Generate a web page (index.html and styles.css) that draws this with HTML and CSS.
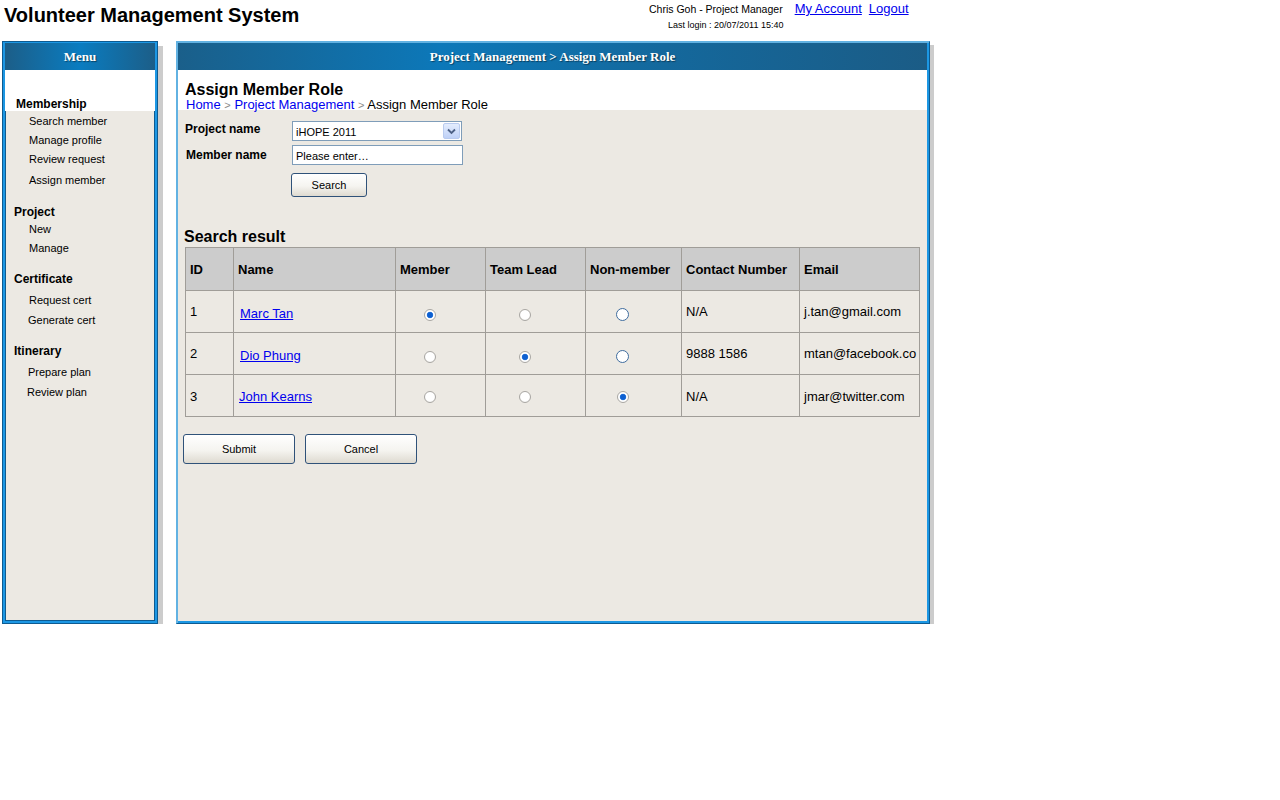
FILE: index.html
```html
<!DOCTYPE html>
<html lang="en">
<head>
<meta charset="utf-8">
<title>Volunteer Management System</title>
<link rel="stylesheet" href="styles.css">
</head>
<body>
<header class="top">
  <h1 class="site-title">Volunteer Management System</h1>
  <div class="user-info">
    <div class="user-line">
      <span class="user-name">Chris Goh - Project Manager</span>
      <a href="#" class="top-link account-link">My Account</a>
      <a href="#" class="top-link logout-link">Logout</a>
    </div>
    <div class="last-login">Last login : 20/07/2011 15:40</div>
  </div>
</header>

<div class="main">
  <aside class="panel panel-menu">
    <div class="panel-head">Menu</div>
    <div class="menu-top"><h4 class="menu-heading">Membership</h4></div>
    <div class="panel-body menu-body">
      <ul class="menu-list">
        <li>Search member</li>
        <li>Manage profile</li>
        <li>Review request</li>
        <li class="gap">Assign member</li>
      </ul>
      <div class="menu-group">
        <h4 class="menu-heading">Project</h4>
        <ul class="menu-list">
          <li>New</li>
          <li>Manage</li>
        </ul>
      </div>
      <div class="menu-group">
        <h4 class="menu-heading">Certificate</h4>
        <ul class="menu-list spaced">
          <li>Request cert</li>
          <li class="nudge">Generate cert</li>
        </ul>
      </div>
      <div class="menu-group">
        <h4 class="menu-heading">Itinerary</h4>
        <ul class="menu-list spaced">
          <li class="nudge">Prepare plan</li>
          <li class="nudge2">Review plan</li>
        </ul>
      </div>
    </div>
  </aside>

  <section class="panel panel-content">
    <div class="panel-head">Project Management &gt; Assign Member Role</div>
    <div class="content-top">
      <h2 class="page-title">Assign Member Role</h2>
      <div class="crumbs"><a href="#" class="crumb-link">Home</a> <span class="sep">&gt;</span> <a href="#" class="crumb-link">Project Management</a> <span class="sep">&gt;</span> Assign Member Role</div>
    </div>
    <div class="panel-body content-body">
      <form class="search-form">
        <div class="form-row">
          <label class="form-label">Project name</label>
          <div class="select">
            <span class="select-value">iHOPE 2011</span>
            <span class="select-btn">
              <svg width="9" height="7" viewBox="0 0 9 7"><path d="M1 1.5 L4.5 5 L8 1.5" fill="none" stroke="#4d6185" stroke-width="1.8"/></svg>
            </span>
          </div>
        </div>
        <div class="form-row row-member">
          <label class="form-label label-member">Member name</label>
          <input class="text-input" type="text" value="Please enter…">
        </div>
        <div class="form-row row-button">
          <span class="form-label"></span>
          <button type="button" class="btn btn-search">Search</button>
        </div>
      </form>

      <h3 class="section-title">Search result</h3>
      <table class="results">
        <colgroup>
          <col class="c-id"><col class="c-name"><col class="c-member"><col class="c-lead"><col class="c-non"><col class="c-contact"><col class="c-email">
        </colgroup>
        <thead>
          <tr><th>ID</th><th>Name</th><th>Member</th><th>Team Lead</th><th>Non-member</th><th>Contact Number</th><th>Email</th></tr>
        </thead>
        <tbody>
          <tr>
            <td>1</td>
            <td class="name"><a href="#">Marc Tan</a></td>
            <td class="radio-cell"><input type="radio" name="r1" checked></td>
            <td class="radio-cell"><input type="radio" name="r1"></td>
            <td class="radio-cell"><input type="radio" name="r1" class="hot"></td>
            <td>N/A</td>
            <td class="email">j.tan@gmail.com</td>
          </tr>
          <tr>
            <td>2</td>
            <td class="name"><a href="#">Dio Phung</a></td>
            <td class="radio-cell"><input type="radio" name="r2"></td>
            <td class="radio-cell"><input type="radio" name="r2" checked></td>
            <td class="radio-cell"><input type="radio" name="r2" class="hot"></td>
            <td>9888 1586</td>
            <td class="email">mtan@facebook.co</td>
          </tr>
          <tr class="row-last">
            <td>3</td>
            <td class="name name-alt"><a href="#">John Kearns</a></td>
            <td class="radio-cell"><input type="radio" name="r3"></td>
            <td class="radio-cell"><input type="radio" name="r3"></td>
            <td class="radio-cell"><input type="radio" name="r3" checked></td>
            <td>N/A</td>
            <td class="email">jmar@twitter.com</td>
          </tr>
        </tbody>
      </table>

      <div class="actions">
        <button type="button" class="btn btn-wide">Submit</button>
        <button type="button" class="btn btn-wide">Cancel</button>
      </div>
    </div>
  </section>
</div>
</body>
</html>
```
FILE: styles.css
```css
body {
  margin: 0;
  background: #fff;
  color: #000;
  font-family: "Liberation Sans", Arial, sans-serif;
}

/* ---------- top header ---------- */
.top {
  display: grid;
  grid-template-columns: 649px auto;
  height: 41px;
}
.site-title {
  margin: 0;
  padding: 3px 0 0 4px;
  font-size: 20px;
  line-height: 24px;
  font-weight: bold;
}
.user-info {
  padding-top: 1px;
}
.user-line {
  display: flex;
  align-items: baseline;
  height: 15px;
}
.user-name {
  font-size: 10.5px;
  line-height: 15px;
}
.top-link {
  font-size: 13px;
  line-height: 15px;
  color: #0000ee;
  text-decoration: underline;
}
.account-link { margin-left: 12px; }
.logout-link { margin-left: 7px; }
.last-login {
  font-size: 9px;
  line-height: 12px;
  padding-left: 19px;
  margin-top: 3px;
}

/* ---------- panels ---------- */
.main {
  display: flex;
  align-items: flex-start;
  gap: 18px;
  padding-left: 2px;
}
.panel {
  box-sizing: border-box;
  height: 583px;
  display: flex;
  flex-direction: column;
  background: #ece9e3;
  border: 1px solid #0d5b91;
  padding: 1px 2px 2px;
}
.panel-menu {
  width: 156px;
  box-shadow: inset 0 0 0 2px #1c97e4, inset 0 0 0 3px #0d5b91, 5px 5px 0 #cccccc;
}
.panel-content {
  width: 754px;
  padding-left: 1px;
  border-color: #62b2e2 #0d5b91 #0d5b91 #62b2e2;
  box-shadow: inset 1px 1px 0 #62b2e2, inset -2px -2px 0 #1c97e4, 4px 4px 0 #cccccc;
}
.panel-head {
  flex: none;
  height: 27px;
  display: flex;
  align-items: center;
  justify-content: center;
  color: #fff;
  font-family: "Liberation Serif", "Times New Roman", serif;
  font-weight: bold;
  font-size: 13px;
  text-shadow: 1px 1px 1px rgba(0, 0, 0, 0.45);
  background: linear-gradient(90deg, #1c5e88 0%, #0a7cc0 50%, #1c5e88 100%);
}
.panel-content .panel-head {
  background: linear-gradient(90deg, #1a5f8a 0%, #0c78b9 35%, #14689c 65%, #1b5c86 100%);
}
.panel-body {
  flex: 1;
}

/* ---------- left menu ---------- */
.menu-top {
  flex: none;
  box-sizing: border-box;
  height: 41px;
  background: #fff;
  display: flex;
  align-items: flex-end;
  padding-left: 11px;
}
.menu-top .menu-heading {
  line-height: 14px;
}
.menu-heading {
  margin: 0;
  font-size: 12px;
  line-height: 16px;
  font-weight: bold;
}
.menu-body {
  padding: 1px 0 0 9px;
  font-size: 11px;
}
.menu-list {
  list-style: none;
  margin: 0;
  padding: 0 0 0 15px;
}
.menu-list li {
  line-height: 19px;
}
.menu-list li.gap {
  margin-top: 2px;
}
.menu-group {
  margin-top: 14px;
}
.menu-group + .menu-group {
  margin-top: 13px;
}
.menu-list.spaced {
  margin-top: 3px;
}
.menu-list.spaced li {
  line-height: 20px;
}
.menu-list li.nudge {
  margin-left: -1px;
}
.menu-list li.nudge2 {
  margin-left: -2px;
}

/* ---------- content ---------- */
.content-top {
  flex: none;
  box-sizing: border-box;
  height: 40px;
  background: #fff;
  padding: 11px 0 0 7px;
}
.page-title {
  margin: 0;
  font-size: 16px;
  line-height: 17px;
  font-weight: bold;
}
.crumbs {
  font-size: 13px;
  line-height: 13px;
  padding-left: 1px;
}
.crumb-link {
  color: #0000ee;
  text-decoration: none;
}
.sep {
  color: #8a8a8a;
  font-size: 11px;
}
.content-body {
  padding: 11px 0 0 7px;
}
.search-form {
  margin: 0;
}
.form-row {
  display: flex;
  align-items: center;
}
.row-member {
  margin-top: 4px;
}
.row-button {
  margin-top: 8px;
}
.form-label {
  flex: none;
  width: 107px;
  font-size: 12px;
  font-weight: bold;
  margin-top: -4px;
}
.label-member {
  padding-left: 1px;
  width: 106px;
  margin-top: -1px;
}
.select {
  box-sizing: border-box;
  width: 170px;
  height: 20px;
  border: 1px solid #7f9db9;
  background: #fff;
  display: flex;
  align-items: center;
  padding-left: 3px;
  font-size: 11px;
}
.select-value {
  padding-top: 2px;
}
.select-btn {
  box-sizing: border-box;
  margin-left: auto;
  margin-right: 1px;
  width: 17px;
  height: 16px;
  border: 1px solid #b9cbef;
  border-radius: 2px;
  background: linear-gradient(#e4edfe, #bfd1f7);
  display: flex;
  align-items: center;
  justify-content: center;
}
.text-input {
  box-sizing: border-box;
  width: 171px;
  height: 20px;
  margin: 0;
  border: 1px solid #7f9db9;
  padding: 2px 3px 0;
  font-family: "Liberation Sans", Arial, sans-serif;
  font-size: 11px;
  color: #000;
  background: #fff;
}
.btn {
  box-sizing: border-box;
  margin: 0;
  padding: 0;
  font-family: "Liberation Sans", Arial, sans-serif;
  font-size: 11px;
  color: #000;
  border: 1px solid #2f5279;
  border-radius: 3px;
  background: linear-gradient(#ffffff 0%, #f5f4f0 55%, #dedad0 100%);
}
.btn-search {
  width: 76px;
  height: 24px;
  margin-left: -1px;
}
.section-title {
  margin: 31px 0 1px -1px;
  font-size: 16px;
  line-height: 18px;
  font-weight: bold;
}

/* ---------- table ---------- */
.results {
  border-collapse: collapse;
  table-layout: fixed;
  width: 734px;
  font-size: 13px;
}
.c-id { width: 48px; }
.c-name { width: 162px; }
.c-member { width: 90px; }
.c-lead { width: 100px; }
.c-non { width: 96px; }
.c-contact { width: 118px; }
.c-email { width: 120px; }
.results th,
.results td {
  border: 1px solid #a09d98;
  padding: 0 4px;
  text-align: left;
  vertical-align: middle;
  white-space: nowrap;
  overflow: hidden;
}
.results thead tr {
  height: 43px;
}
.results tbody tr {
  height: 42px;
}
.results th {
  background: #cccccc;
  font-weight: bold;
}
.results td.name {
  padding-left: 6px;
  padding-top: 4px;
}
.results td.name-alt {
  padding-left: 5px;
  padding-top: 0;
}
.results td.name a {
  color: #0000ee;
  text-decoration: underline;
}
.results td.radio-cell {
  text-align: center;
  padding: 4px 22px 0 0;
}
.results .row-last td {
  padding-top: 2px;
}
.results .row-last td.radio-cell {
  padding-top: 0;
}
.results td.email {
  padding-right: 0;
}
.results input[type="radio"] {
  appearance: none;
  -webkit-appearance: none;
  box-sizing: border-box;
  width: 12px;
  height: 12px;
  margin: 0;
  border: 1px solid #a8a6a2;
  border-radius: 50%;
  background: radial-gradient(circle at 50% 45%, #ffffff 55%, #e8e6e2 100%);
  vertical-align: middle;
}
.results input[type="radio"].hot {
  width: 13px;
  height: 13px;
  border-color: #3f6c9e;
  background: #fff;
}
.results input[type="radio"]:checked {
  background: radial-gradient(circle, #0d5fd0 0 2.4px, #3f86e0 3px, #ffffff 3.6px);
}

/* ---------- actions ---------- */
.actions {
  display: flex;
  gap: 10px;
  margin: 17px 0 0 -2px;
}
.btn-wide {
  width: 112px;
  height: 30px;
}
```
